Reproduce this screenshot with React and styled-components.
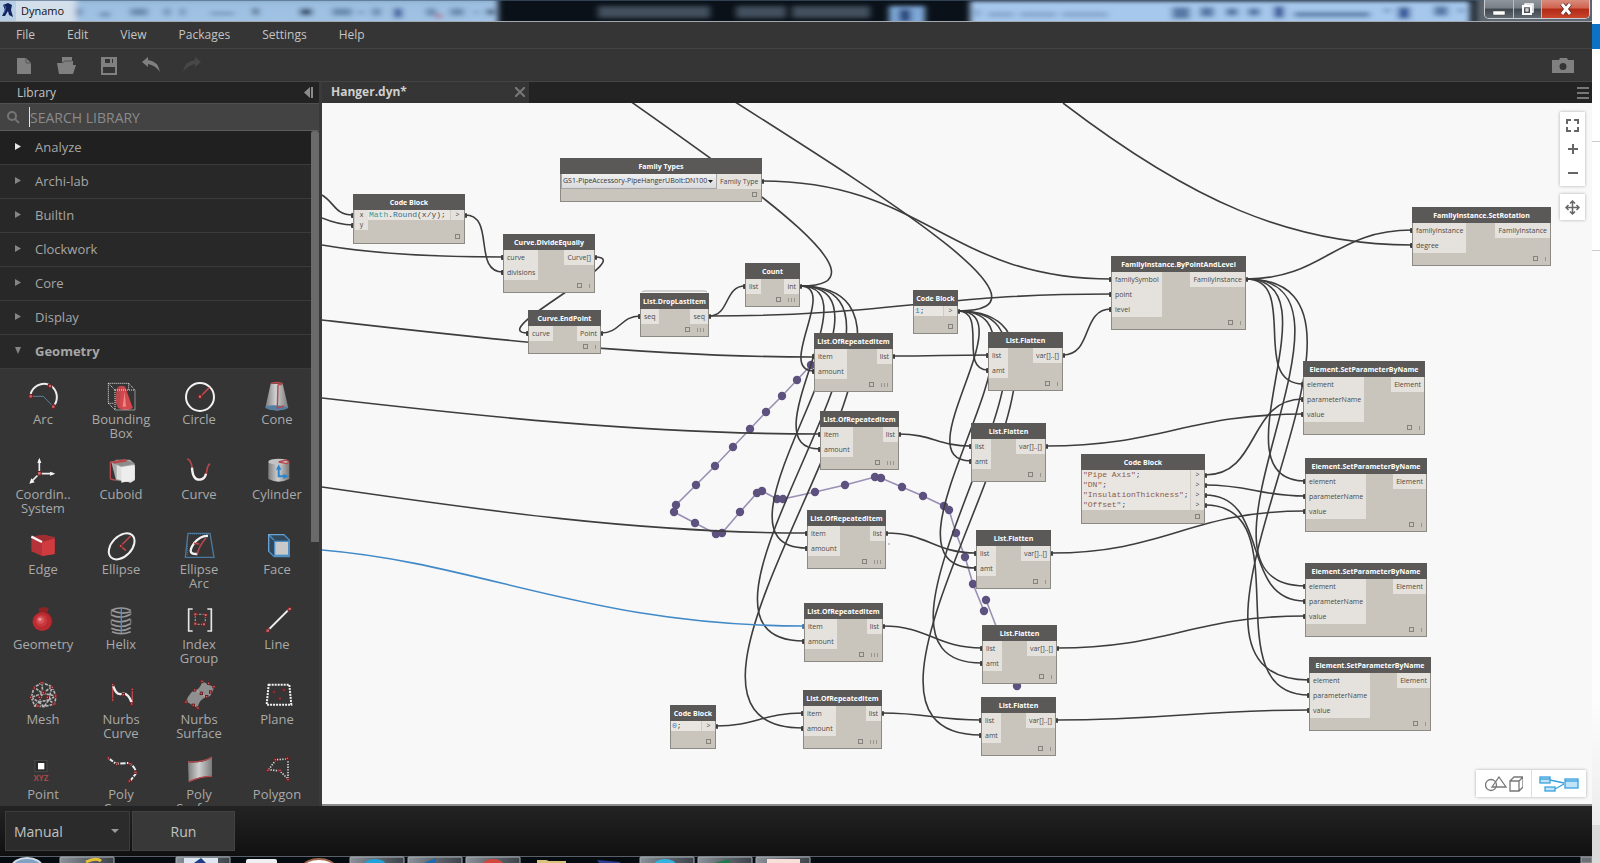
import React, { useState } from 'react';
import styled, { createGlobalStyle, css } from 'styled-components';

const GlobalStyle = createGlobalStyle`
  * { box-sizing: border-box; }
  body { margin: 0; background: #fff; font-family: 'Open Sans', 'Noto Sans', sans-serif; }
  button, input, select { font: inherit; color: inherit; border: 0; margin: 0; padding: 0; background: none; outline: none; }
  svg { display: block; }
`;

/* ---------- window ---------- */

const Screen = styled.div`
  display: flex;
  height: 100vh;
  overflow: hidden;
`;

const Desktop = styled.div`
  width: 8px;
  background: linear-gradient(#fff 0 24px, #0b72c6 24px 49px, #fff 49px 141px, #ccc 141px 142px, #fff 142px 250px, #ccc 250px 251px, #fdfdfd 251px 700px, #ececec 825px, #dadada 825px);
`;

const Window = styled.div`
  flex: 1;
  min-width: 0;
  display: flex;
  flex-direction: column;
  background: #353535;
  color: #b4b4b4;
`;

const TitleBar = styled.header`
  position: relative;
  display: flex;
  align-items: center;
  height: 22px;
  flex-shrink: 0;
  border-bottom: 1px solid #a3a9ae;
  background: #0a1119;
  overflow: hidden;
`;

const Glass = styled.svg`
  position: absolute;
  inset: 0;
  width: 100%;
  height: 22px;
`;

const AppTitle = styled.h1`
  position: relative;
  flex: 1;
  margin: 0 0 0 5px;
  font-size: 11px;
  font-weight: 400;
  line-height: 22px;
  color: #111;
`;

const AppMark = styled.svg`
  position: relative;
`;

const WindowButtons = styled.div`
  position: relative;
  align-self: flex-start;
  display: flex;
  margin-right: 2px;
  height: 19px;
  border: 1px solid #c9cdd1;
  border-top: 0;
  border-radius: 0 0 5px 5px;
  overflow: hidden;
`;

const WindowButton = styled.button`
  display: flex;
  align-items: center;
  justify-content: center;
  width: ${({ $wide }) => ($wide ? 48 : 28)}px;
  border-left: ${({ $first }) => ($first ? 0 : '1px solid #b9bdc2')};
  background: ${({ $close }) =>
    $close
      ? 'linear-gradient(#d98c7c, #cf6350 45%, #b12a17 50%, #c8452c)'
      : 'linear-gradient(#8f959b, #787e85 45%, #3f464e 50%, #626a73)'};
`;

/* ---------- menu and toolbar ---------- */

const MenuBar = styled.nav`
  display: flex;
  gap: 32px;
  height: 27px;
  flex-shrink: 0;
  padding: 0 16px;
  border-bottom: 1px solid #444;
`;

const MenuItem = styled.button`
  font-size: 12px;
  line-height: 24px;
  color: #c4c4c4;
`;

const ToolBar = styled.div`
  display: flex;
  align-items: center;
  gap: 22px;
  height: 33px;
  flex-shrink: 0;
  padding: 1px 18px 0 14px;
  border-bottom: 1px solid #444;
`;

const ToolButton = styled.button`
  width: 20px;
  height: 20px;
  color: ${({ $dim }) => ($dim ? '#484848' : '#808080')};
  ${({ $end }) => $end && css`
    width: 22px;
    margin-left: auto;
  `}
`;

const Main = styled.div`
  flex: 1;
  min-height: 0;
  display: flex;
`;

/* ---------- library ---------- */

const Library = styled.aside`
  width: 322px;
  flex-shrink: 0;
  display: flex;
  flex-direction: column;
  border-right: 3px solid #3a3a3a;
`;

const LibraryHead = styled.div`
  display: flex;
  align-items: center;
  justify-content: space-between;
  height: 21px;
  flex-shrink: 0;
  padding: 0 5px 0 17px;
  background: #232323;
`;

const LibraryTitle = styled.h2`
  margin: 0;
  font-size: 12px;
  font-weight: 400;
  line-height: 20px;
  color: #c4c4c4;
`;

const Search = styled.label`
  display: flex;
  align-items: center;
  height: 28px;
  flex-shrink: 0;
  padding-left: 7px;
  border-top: 1px solid #505050;
  border-bottom: 1px solid #5c5c5c;
  background: #434343;
`;

const Caret = styled.span`
  width: 1px;
  height: 20px;
  margin-left: 9px;
  background: #e4e4e4;
`;

const SearchInput = styled.input`
  flex: 1;
  min-width: 0;
  font-size: 14px;
  &::placeholder { color: #8a8a8a; opacity: 1; }
`;

const LibraryBody = styled.div`
  flex: 1;
  min-height: 0;
  display: flex;
  overflow: hidden;
`;

const Categories = styled.div`
  flex: 1;
  min-width: 0;
`;

const ScrollTrack = styled.div`
  width: 8px;
`;

const ScrollThumb = styled.div`
  height: 411px;
  border-radius: 3px 3px 0 0;
  background: #6a6a6a;
`;

const Category = styled.button`
  display: flex;
  align-items: center;
  gap: 14px;
  width: 100%;
  height: 34px;
  padding: 0 15px 2px;
  border-bottom: 1px solid #3b3b3b;
  background: ${({ $hover }) => ($hover ? '#202020' : '#282828')};
  font-size: 13px;
  font-weight: ${({ $open }) => ($open ? 700 : 400)};
  color: #a6a6a6;
  svg { fill: ${({ $hover }) => ($hover ? '#e6e6e6' : '#858585')}; }
`;

const Tiles = styled.div`
  display: grid;
  grid-template-columns: repeat(4, 78px);
  grid-auto-rows: 75px;
  padding: 13px 0 0 4px;
`;

const Tile = styled.button`
  display: flex;
  flex-direction: column;
  align-items: center;
  justify-content: flex-start;
  font-size: 13px;
  line-height: 14px;
  color: #a9a9a9;
  svg { overflow: visible; flex-shrink: 0; }
  span { max-width: 60px; }
`;

/* ---------- workspace ---------- */

const Workspace = styled.section`
  flex: 1;
  min-width: 0;
  display: flex;
  flex-direction: column;
`;

const Tabs = styled.div`
  display: flex;
  height: 21px;
  flex-shrink: 0;
  background: #232323;
`;

const Tab = styled.div`
  display: flex;
  align-items: center;
  justify-content: space-between;
  width: 207px;
  padding: 0 4px 2px 9px;
  background: #353535;
  font-size: 12px;
  font-weight: 700;
  line-height: 18px;
  color: #cfcfcf;
`;

const TabMenu = styled.button`
  margin: 0 3px 0 auto;
`;

const Canvas = styled.div`
  position: relative;
  flex: 1;
  overflow: hidden;
  background: #f8f8f8;
  border-bottom: 2px solid #8b8b8b;
`;

/* the graph is panned: its origin lies above and to the left of the canvas */
const World = styled.div`
  position: absolute;
  left: -322px;
  top: -103px;
`;

const Wires = styled.svg`
  position: absolute;
  left: 0;
  top: 0;
  overflow: visible;
`;

const NodeCard = styled.article`
  position: absolute;
  display: flex;
  flex-direction: column;
  min-height: 44px;
  border: 1px solid #8c8a85;
  background: #cac5bc;
  font-size: 7px;
  color: #4a4947;
`;

const NodeTitle = styled.h3`
  margin: -1px -1px 0;
  height: 16px;
  background: #5b5957;
  color: #fff;
  font-size: 7px;
  font-weight: 700;
  line-height: 17px;
  text-align: center;
  white-space: nowrap;
`;

const NodeBody = styled.div`
  display: flex;
  justify-content: space-between;
  align-items: flex-start;
`;

const Ports = styled.ul`
  margin: 0;
  padding: 0;
  list-style: none;
  flex-shrink: 0;
`;

const Port = styled.li`
  height: ${({ $code }) => ($code ? 10 : 15)}px;
  padding: 0 3px;
  background: #e5e2dd;
  line-height: ${({ $code }) => ($code ? 10 : 15)}px;
  white-space: nowrap;
  ${({ $code }) => $code && css`
    width: 14px;
    text-align: center;
    border-left: 1px solid #cfcbc4;
  `}
`;

const Editor = styled.pre`
  flex: 1;
  min-width: 0;
  margin: 0;
  padding-left: 1px;
  background: #e9e6e2;
  font-family: 'Liberation Mono', monospace;
  font-size: 8px;
  line-height: 10px;
`;

const Code = styled.span`
  color: ${({ $kind }) => ({ cls: '#35a09c', fn: '#2c6f95', str: '#8b5a48', num: '#2f7fd0' }[$kind] || '#444')};
`;

const FamilySelect = styled.label`
  display: flex;
  align-items: center;
  flex: 1;
  height: 15px;
  padding: 0 3px 0 1px;
  border: 1px solid #a5a5a5;
  border-top: 0;
  background: linear-gradient(#f0f0f0, #d9dadd);
  select {
    flex: 1;
    min-width: 0;
    appearance: none;
    font-size: 7px;
    line-height: 12px;
    color: #333;
  }
`;

const NodeFoot = styled.footer`
  flex: 1;
  display: flex;
  align-items: flex-end;
  justify-content: flex-end;
  gap: 7px;
  min-height: ${({ $code }) => ($code ? 13 : 12)}px;
  padding: 0 4px 4px;
`;

const Preview = styled.span`
  width: 5px;
  height: 5px;
  border: 1px solid #85827d;
`;

const Lacing = styled.span`
  display: flex;
  gap: 2px;
  i { width: 1px; height: 4px; background: #98958f; }
`;

const NavTools = styled.div`
  position: absolute;
  top: 9px;
  right: 7px;
  display: flex;
  flex-direction: column;
  gap: 8px;
`;

const NavGroup = styled.div`
  display: flex;
  flex-direction: column;
  padding: 1px 0;
  background: #fff;
  box-shadow: 0 0 3px rgba(0, 0, 0, 0.3);
`;

const NavButton = styled.button`
  display: flex;
  align-items: center;
  justify-content: center;
  width: 25px;
  height: 24px;
`;

const ViewSwitch = styled.div`
  position: absolute;
  right: 6px;
  bottom: 7px;
  display: flex;
  background: #fff;
  box-shadow: 0 0 3px rgba(0, 0, 0, 0.3);
`;

const ViewButton = styled.button`
  display: flex;
  align-items: center;
  justify-content: center;
  width: 55px;
  height: 27px;
  & + & { border-left: 1px solid #ddd; }
`;

/* ---------- run bar and task bar ---------- */

const RunBar = styled.div`
  display: flex;
  align-items: center;
  gap: 2px;
  height: 50px;
  flex-shrink: 0;
  padding: 0 5px;
  background: linear-gradient(#232323, #101010);
`;

const RunMode = styled.label`
  display: flex;
  align-items: center;
  width: 125px;
  height: 40px;
  padding: 0 10px 0 8px;
  border: 1px solid #3c3c3c;
  background: #2b2b2b;
  select {
    flex: 1;
    appearance: none;
    font-size: 14px;
    color: #c2c2c2;
  }
`;

const RunButton = styled.button`
  width: 103px;
  height: 40px;
  border: 1px solid #424242;
  background: #383838;
  font-size: 14px;
  color: #c2c2c2;
`;

const TaskBar = styled.svg`
  flex-shrink: 0;
  width: 100%;
  height: 7px;
`;

/* ---------- library drawings ---------- */

const RED = '#b8474b';
const BLUE = '#4f8fc4';

const Dots = ({ at, size = 10 }) =>
  at.map(([x, y], i) => (
    <rect key={i} x={x - size / 2} y={y - size / 2} width={size} height={size} fill="#d5686b" stroke="#6b1f22" strokeWidth="3" />
  ));

const drawings = {
  Arc: (
    <>
      <path d="M12 43H46L74 72" fill="none" stroke="#5b7f9d" strokeWidth="3" />
      <path d="M8 36A42 42 0 0 1 62 8M70 12A42 42 0 0 1 80 68" fill="none" stroke="#eee" strokeWidth="6" />
      <Dots at={[[8, 43], [66, 12], [76, 74]]} />
    </>
  ),
  'Bounding Box': (
    <>
      <path d="M32 20Q38 8 54 12L80 78Q60 90 36 78L28 60Z" fill={RED} />
      <path d="M46 14L40 78Q60 88 80 78L58 14Z" fill="#d9484c" opacity=".8" />
      <path d="M56 30L50 74H60Z" fill="#eb8a8c" />
      <path d="M7 4H68L87 24V84H27L7 64ZM27 24H87M27 24V84M7 4L27 24M68 4V24M7 64H24" fill="none" stroke="#e9e9e9" strokeWidth="3" strokeDasharray="3 3" />
    </>
  ),
  Circle: (
    <>
      <circle cx="48" cy="45" r="42" fill="none" stroke="#f2f2f2" strokeWidth="6" />
      <path d="M48 45L76 17" stroke={RED} strokeWidth="5" />
      <Dots at={[[48, 44]]} />
    </>
  ),
  Cone: (
    <>
      <path d="M26 5H62L79 78Q46 92 10 78Z" fill="url(#metal)" />
      <path d="M11 72Q8 84 46 86Q74 84 78 76Q50 66 11 72Z" fill="#557ea3" />
      <path d="M26 5Q44 -2 62 5M48 8L46 78L66 72M48 8H60" fill="none" stroke={RED} strokeWidth="4" />
    </>
  ),
  'Coordin.. System': (
    <>
      <path d="M34 44V10M40 50H76M30 54L10 74" stroke="#eee" strokeWidth="5" />
      <path d="M34 2L28 18H40ZM82 50L66 44V56ZM4 80L20 76L10 64Z" fill="#f4f4f4" />
      <Dots at={[[34, 49]]} size={11} />
    </>
  ),
  Cuboid: (
    <>
      <path d="M16 16L32 8H72L86 20V64L74 76L30 70Z" fill="#a9a9a9" />
      <path d="M12 14L58 8L86 20L46 28Z" fill="#8c8c8c" />
      <path d="M32 24L46 30H86V70L74 77L32 66Z" fill="#dedede" />
      <path d="M46 30L86 24V68L46 77Z" fill="#ededed" />
      <path d="M13 66V16L58 8L60 12L22 18M13 66L30 70" fill="none" stroke={RED} strokeWidth="4" />
    </>
  ),
  Curve: (
    <>
      <path d="M10 5Q24 14 24 34Q26 70 50 68Q66 66 68 44Q70 26 78 20" fill="none" stroke={RED} strokeWidth="5" />
      <path d="M24 32Q26 70 48 68Q62 66 66 50" fill="none" stroke="#f2f2f2" strokeWidth="7" />
    </>
  ),
  Cylinder: (
    <>
      <path d="M19 14V66Q50 82 82 66V14Q50 28 19 14Z" fill="url(#metal)" />
      <ellipse cx="50" cy="14" rx="31" ry="9" fill="#c3c3c3" />
      <path d="M50 15L72 9Q86 14 74 20L50 15" fill="none" stroke={RED} strokeWidth="4" />
      <path d="M50 34V58H72" fill="none" stroke="#2b86cf" strokeWidth="6" />
      <path d="M50 22L42 38H58ZM80 58L64 50V66Z" fill="#2b86cf" />
    </>
  ),
  Edge: (
    <>
      <path d="M10 14L48 8L80 16V66L42 72L10 58Z" fill="#b63439" />
      <path d="M42 30L80 20V66L42 72Z" fill="#d03b40" />
      <path d="M10 14L48 8L80 18L42 30Z" fill="#a12c31" />
      <path d="M10 14L42 30" stroke="#f6f6f6" strokeWidth="7" />
    </>
  ),
  Ellipse: (
    <>
      <ellipse cx="47" cy="43" rx="46" ry="30" transform="rotate(-46 47 43)" fill="none" stroke="#f2f2f2" strokeWidth="6" />
      <path d="M44 42L74 12M44 42L60 56" stroke={RED} strokeWidth="5" />
      <Dots at={[[44, 42]]} size={8} />
    </>
  ),
  'Ellipse Arc': (
    <>
      <path d="M12 4H78L90 76H4Z" fill="none" stroke="#49799f" strokeWidth="4" />
      <path d="M10 12V70M18 6H74" stroke="#49799f" strokeWidth="3" strokeDasharray="3 3" />
      <path d="M72 12Q50 10 30 34Q6 68 40 66" fill="none" stroke="#f2f2f2" strokeWidth="7" />
      <path d="M40 66Q44 44 66 18" fill="none" stroke={RED} strokeWidth="5" />
      <path d="M30 34L46 36" stroke={RED} strokeWidth="5" />
    </>
  ),
  Face: (
    <>
      <path d="M20 8H66L82 24V74H36L20 58ZM20 8L36 24" fill="#31485c" stroke={BLUE} strokeWidth="4" />
      <path d="M20 8H66M20 8V58" stroke="#8dbde4" strokeWidth="3" strokeDasharray="3 3" />
      <rect x="38" y="28" width="42" height="42" fill="#c9c9c9" stroke={BLUE} strokeWidth="4" />
    </>
  ),
  Geometry: (
    <>
      <path d="M32 4Q46 -2 62 4L58 16Q74 28 74 46A31 30 0 0 1 13 46Q14 26 34 16Z" fill="#8e2327" />
      <circle cx="42" cy="44" r="28" fill="#b92b30" />
      <circle cx="40" cy="41" r="18" fill="#c8383d" />
      <circle cx="38" cy="39" r="11" fill="#d65459" />
      <circle cx="36" cy="37" r="5" fill="#eb9799" />
    </>
  ),
  Helix: (
    <>
      <path d="M16 10Q46 -4 74 10M16 10Q46 24 74 14M16 24Q46 38 74 22M16 38Q46 52 74 36M16 52Q46 66 74 50M16 64Q46 78 74 62M18 74Q46 86 74 74" fill="none" stroke="#9a9a9a" strokeWidth="5" />
      <path d="M16 10V24M74 10V24M16 38V52M74 36V50" stroke="#777" strokeWidth="4" />
      <path d="M46 0V78" stroke="#4a90d4" strokeWidth="4" />
    </>
  ),
  'Index Group': (
    <>
      <path d="M26 6H14V72H26M70 6H82V72H70" fill="none" stroke="#e6e6e6" strokeWidth="5" />
      <path d="M34 22H64V52H34Z" fill="none" stroke="#909090" strokeWidth="4" strokeDasharray="7 4" />
      <Dots at={[[34, 22], [65, 24], [34, 50], [60, 52]]} size={9} />
    </>
  ),
  Line: (
    <>
      <path d="M20 68L80 8" stroke="#f2f2f2" strokeWidth="6" />
      <Dots at={[[17, 71], [83, 6]]} />
    </>
  ),
  Mesh: (
    <>
      <path d="M42 2L18 16L10 46L20 72L48 74L80 66L84 42L72 14ZM42 2L44 34L18 16M44 34L72 14M44 34L84 42M44 34L10 46M44 34L32 60L20 72M32 60L62 54L80 66M32 60L48 74L62 54L72 14M10 46L32 60M62 54L84 42" fill="none" stroke="#b5b5b5" strokeWidth="5" strokeDasharray="9 3" />
      <Dots at={[[42, 2], [19, 18], [8, 46], [46, 32], [73, 16], [83, 42], [30, 72], [78, 66], [58, 46], [34, 46]]} size={7} />
    </>
  ),
  'Nurbs Curve': (
    <>
      <path d="M20 8V54M79 22V64" stroke={RED} strokeWidth="4" />
      <path d="M21 10Q30 40 46 36Q66 30 77 62" fill="none" stroke="#ededed" strokeWidth="7" />
      <Dots at={[[20, 8], [20, 54], [79, 22], [77, 66], [52, 38]]} size={7} />
    </>
  ),
  'Nurbs Surface': (
    <>
      <path d="M34 24Q46 24 56 -2Q72 10 90 14Q84 46 66 46Q48 50 40 78Q22 68 6 58Q18 28 34 24Z" fill="#8f8f8f" />
      <path d="M34 24L68 46" stroke="#b5b5b5" strokeWidth="3" />
      <Dots at={[[54, -2], [74, 4], [90, 14], [6, 60], [28, 70], [42, 78], [32, 24], [52, 34], [68, 44], [80, 30]]} size={7} />
    </>
  ),
  Plane: (
    <>
      <path d="M20 8H82L88 68H14Z" fill="none" stroke="#f4f4f4" strokeWidth="6" strokeDasharray="6 3" />
      <Dots at={[[36, 30], [66, 24], [54, 50]]} size={6} />
    </>
  ),
  Point: (
    <>
      <rect x="21" y="10" width="36" height="34" fill="#2a2a2a" stroke="#555" strokeWidth="2" />
      <rect x="30" y="18" width="19" height="19" fill="#fff" />
      <text x="39" y="72" fill="#a3494c" fontSize="24" fontWeight="700" textAnchor="middle">XYZ</text>
    </>
  ),
  'Poly Curve': (
    <>
      <path d="M8 4L30 20L70 18Q94 36 88 52L72 72" fill="none" stroke="#ededed" strokeWidth="6" strokeDasharray="16 4" />
      <Dots at={[[7, 3], [32, 22], [72, 20], [87, 46], [70, 72]]} size={7} />
    </>
  ),
  'Poly Surface': (
    <>
      <path d="M12 16Q52 20 84 2V58Q50 58 14 74Z" fill="url(#metal)" />
      <path d="M12 14Q52 18 84 0M14 74Q50 58 84 58" fill="none" stroke={RED} strokeWidth="4" />
    </>
  ),
  Polygon: (
    <>
      <path d="M20 38L42 8L78 6V66L54 42Z" fill="none" stroke="#d8d8d8" strokeWidth="5" strokeDasharray="4 4" />
      <Dots at={[[18, 40], [40, 8], [76, 4], [54, 40], [78, 68]]} size={7} />
    </>
  ),
};

const LibraryIcon = ({ name }) => (
  <svg width="30" height="30" viewBox="0 0 90 90" aria-hidden="true">
    <defs>
      <linearGradient id="metal">
        <stop offset="0" stopColor="#7d7d7d" />
        <stop offset=".45" stopColor="#d0d0d0" />
        <stop offset="1" stopColor="#7a7a7a" />
      </linearGradient>
    </defs>
    {drawings[name]}
  </svg>
);

/* ---------- graph data ---------- */

const repeated = (id, x, y) => ({ id, x, y, w: 79, title: 'List.OfRepeatedItem', ins: ['item', 'amount'], outs: ['list'], lacing: 3 });
const flatten = (id, x, y) => ({ id, x, y, w: 75, title: 'List.Flatten', ins: ['list', 'amt'], outs: ['var[]..[]'], lacing: 1 });
const setParam = (id, x, y) => ({ id, x, y, w: 122, title: 'Element.SetParameterByName', ins: ['element', 'parameterName', 'value'], outs: ['Element'], lacing: 1 });

const nodes = [
  { id: 'round', x: 353, y: 194, w: 112, title: 'Code Block', ins: ['x', 'y'], outs: ['>'], code: [[['cls', 'Math'], ['', '.'], ['fn', 'Round'], ['', '(x/y);']]] },
  { id: 'divide', x: 503, y: 234, w: 92, title: 'Curve.DivideEqually', ins: ['curve', 'divisions'], outs: ['Curve[]'], lacing: 1 },
  { id: 'end', x: 528, y: 310, w: 73, title: 'Curve.EndPoint', ins: ['curve'], outs: ['Point'], lacing: 1 },
  { id: 'drop', x: 640, y: 293, w: 69, title: 'List.DropLastItem', ins: ['seq'], outs: ['seq'], lacing: 3 },
  { id: 'count', x: 745, y: 263, w: 55, title: 'Count', ins: ['list'], outs: ['int'], lacing: 3 },
  { id: 'types', x: 560, y: 158, w: 202, title: 'Family Types', ins: [], outs: ['Family Type'], family: 'GS1-PipeAccessory-PipeHangerUBolt:DN100' },
  repeated('rep1', 814, 333),
  repeated('rep2', 820, 411),
  repeated('rep3', 807, 510),
  repeated('rep4', 804, 603),
  repeated('rep5', 803, 690),
  { id: 'zero', x: 670, y: 705, w: 46, title: 'Code Block', ins: [], outs: ['>'], code: [[['num', '0'], ['', ';']]] },
  { id: 'one', x: 913, y: 290, w: 45, title: 'Code Block', ins: [], outs: ['>'], code: [[['num', '1'], ['', ';']]] },
  flatten('flat1', 988, 332),
  flatten('flat2', 971, 423),
  flatten('flat3', 976, 530),
  flatten('flat4', 982, 625),
  flatten('flat5', 981, 697),
  { id: 'place', x: 1111, y: 256, w: 135, title: 'FamilyInstance.ByPointAndLevel', ins: ['familySymbol', 'point', 'level'], outs: ['FamilyInstance'], lacing: 1 },
  { id: 'names', x: 1081, y: 454, w: 124, title: 'Code Block', ins: [], outs: ['>', '>', '>', '>'], code: ['"Pipe Axis"', '"DN"', '"InsulationThickness"', '"Offset"'].map(s => [['str', s], ['', ';']]) },
  setParam('set1', 1303, 361),
  setParam('set2', 1305, 458),
  setParam('set3', 1305, 563),
  setParam('set4', 1309, 657),
  { id: 'rotate', x: 1412, y: 207, w: 139, title: 'FamilyInstance.SetRotation', ins: ['familyInstance', 'degree'], outs: ['FamilyInstance'], lacing: 1 },
];

const links = [
  ['round', 0, 'divide', 1],
  ['divide', 0, 'end', 0],
  ['end', 0, 'drop', 0],
  ['drop', 0, 'count', 0],
  ['drop', 0, 'place', 1],
  ['types', 0, 'place', 0],
  ...[1, 2, 3, 4, 5].map(n => ['count', 0, `rep${n}`, 1]),
  ...[1, 2, 3, 4, 5].map(n => ['one', 0, `flat${n}`, 1]),
  ...[1, 2, 3, 4, 5].map(n => [`rep${n}`, 0, `flat${n}`, 0]),
  ['zero', 0, 'rep5', 0],
  ['flat1', 0, 'place', 2],
  ...[1, 2, 3, 4].map(n => [`flat${n + 1}`, 0, `set${n}`, 2]),
  ...[1, 2, 3, 4].map(n => ['place', 0, `set${n}`, 0]),
  ...[1, 2, 3, 4].map(n => ['names', n - 1, `set${n}`, 1]),
  ['place', 0, 'rotate', 0],
];

// wires whose other end is outside the view
const looseWires = [
  'M322 195C335 203 335 215 353 215',
  'M322 218C334 223 342 225 353 225',
  'M322 245C380 255 440 257 503 257',
  'M322 320C470 337 640 357 814 357',
  'M322 398C470 415 640 434 820 434',
  'M322 487C480 510 640 533 807 533',
  'M801 286C984 286 276 -84 459 -84',
  'M958 311C1170 311 304 -105 514 -105',
  'M1063 103C1190 200 1290 245 1412 245',
];

const preview = [
  [811, 365], [797, 380], [782, 396], [766, 412], [750, 429], [733, 447], [715, 466], [696, 485], [676, 505], [674, 512],
  [695, 523], [716, 534], [722, 533], [740, 512], [757, 493], [762, 491], [777, 499], [783, 499], [815, 492], [845, 485],
  [875, 477], [881, 478], [902, 487], [923, 496], [944, 506], [949, 510], [956, 533], [965, 557], [973, 584], [984, 611],
];
const previewTail = [[986, 600], [996, 626], [1017, 686]];

const portY = (node, i) => node.y + (node.code ? 21 + 10 * i : 23 + 15 * i);
const byId = Object.fromEntries(nodes.map(n => [n.id, n]));

function wirePath([from, out, to, into]) {
  const a = byId[from];
  const b = byId[to];
  const x1 = a.x + a.w;
  const y1 = portY(a, out);
  const x2 = b.x;
  const y2 = portY(b, into);
  const o = 0.45 * Math.hypot(x2 - x1, y2 - y1);
  return `M${x1} ${y1}C${x1 + o} ${y1} ${x2 - o} ${y2} ${x2} ${y2}`;
}

function GraphNode({ node }) {
  const { x, y, w, title, ins, outs, code, family, lacing } = node;
  return (
    <NodeCard style={{ left: x, top: y, width: w }}>
      <NodeTitle>{title}</NodeTitle>
      <NodeBody>
        {(ins.length > 0) && (
          <Ports>
            {ins.map(name => <Port key={name} $code={!!code}>{name}</Port>)}
          </Ports>
        )}
        {code && (
          <Editor>
            {code.map((line, i) => (
              <div key={i}>{line.map(([kind, text], k) => <Code key={k} $kind={kind}>{text}</Code>)}</div>
            ))}
          </Editor>
        )}
        {family && (
          <FamilySelect>
            <select aria-label="Family type" defaultValue={family}><option>{family}</option></select>
            <svg width="5" height="3" viewBox="0 0 5 3"><path d="M0 0H5L2.500 3Z" fill="#222" /></svg>
          </FamilySelect>
        )}
        <Ports>
          {outs.map((name, i) => <Port key={i} $code={!!code}>{name}</Port>)}
        </Ports>
      </NodeBody>
      <NodeFoot $code={!!code}>
        <Preview />
        {lacing && <Lacing>{Array.from({ length: lacing }, (_, i) => <i key={i} />)}</Lacing>}
      </NodeFoot>
    </NodeCard>
  );
}

function Graph() {
  const inPorts = nodes.flatMap(n => n.ins.map((_, i) => [n.x - 2, portY(n, i), n.id === 'rep4' && i === 0]));
  const outPorts = nodes
    .filter(n => links.some(l => l[0] === n.id))
    .flatMap(n => n.outs.map((_, i) => [n.x + n.w, portY(n, i)]));
  return (
    <World>
      <Wires width="1600" height="863" aria-hidden="true">
        <g fill="none" stroke="#9a8fb5" strokeWidth="1.6">
          <polyline points={preview.join(' ')} />
          <polyline points={previewTail.join(' ')} />
        </g>
        <g fill="#5d517f">
          {[...preview, previewTail[0], previewTail[2]].map(([cx, cy], i) => <circle key={i} cx={cx} cy={cy} r="4.2" />)}
        </g>
        <circle cx="889" cy="544" r="1" fill="#bbb" />
        <g fill="none" stroke="#3d3d3d" strokeWidth="1.6">
          {looseWires.map(d => <path key={d} d={d} />)}
          {links.map(l => <path key={l.join()} d={wirePath(l)} />)}
        </g>
        <path d="M322 550C480 563 590 626 804 626" fill="none" stroke="#4189c7" strokeWidth="1.6" />
        <path d="M642 292Q643 291 645 291H704Q706 291 707 292" fill="none" stroke="#aaa" />
        {inPorts.map(([x, y, hot], i) => <rect key={i} x={x} y={y - 2} width="3" height="5" rx="1" fill={hot ? '#3b7db8' : '#3d3d3d'} />)}
        {outPorts.map(([x, y], i) => <rect key={i} x={x} y={y - 2} width="2" height="5" rx="1" fill="#3d3d3d" />)}
      </Wires>
      {nodes.map(n => <GraphNode key={n.id} node={n} />)}
    </World>
  );
}

/* ---------- chrome drawings ---------- */

const Smudges = ({ list, fill }) => list.map(([x, w, y = 8, h = 8], i) => <rect key={i} x={x} y={y} width={w} height={h} fill={fill} />);

const TitleGlass = () => (
  <Glass viewBox="0 0 1592 22" preserveAspectRatio="none" aria-hidden="true">
    <defs>
      <filter id="soft" x="-20%" y="-50%" width="140%" height="200%"><feGaussianBlur stdDeviation="3 2.2" /></filter>
      <linearGradient id="sky" x2="0" y2="1">
        <stop offset="0" stopColor="#6f94b8" />
        <stop offset=".2" stopColor="#9dbfe0" />
        <stop offset="1" stopColor="#a3c4e6" />
      </linearGradient>
    </defs>
    <rect width="1592" height="22" fill="#0a1119" />
    <g filter="url(#soft)">
      <rect x="-10" y="-4" width="508" height="36" fill="url(#sky)" />
      <rect x="970" y="1" width="500" height="34" fill="#a6c8ec" />
      <rect x="1476" y="-4" width="130" height="36" fill="#5d6670" />
      <rect x="-4" y="-2" width="80" height="30" fill="#d3dfeb" />
      <rect x="889" y="6" width="36" height="22" fill="#7fa9d8" />
      <rect x="899" y="9" width="12" height="13" fill="#26477f" />
      <Smudges fill="#42505d" list={[[598, 112, 6, 12], [736, 50, 6, 12], [792, 78, 6, 12]]} />
      <Smudges fill="#6b8db0" list={[[76, 6], [100, 10, 12, 5], [130, 18], [164, 6], [180, 5], [210, 24, 12, 3], [254, 5], [300, 12], [332, 20], [358, 6, 11, 3], [372, 9], [426, 10], [450, 14], [474, 5, 11, 3]]} />
      <Smudges fill="#2d4668" list={[[300, 12, 9, 6], [253, 4, 8, 6], [487, 7, 9, 6]]} />
      <Smudges fill="#b0607a" list={[[436, 6, 14, 4]]} />
      <Smudges fill="#86a6cb" list={[[974, 6, 9, 8], [988, 26, 12, 5], [1020, 36, 12, 5], [1062, 46, 12, 5]]} />
      <Smudges fill="#5578a5" list={[[1172, 18, 7, 12], [1200, 14, 7, 10], [1226, 12], [1248, 12], [1294, 76, 12, 5], [1384, 6, 9, 3], [1434, 14, 6, 10], [1458, 6, 9, 3]]} />
      <Smudges fill="#31569a" list={[[1274, 10, 6, 12], [1398, 12, 7, 12], [394, 8, 8, 10]]} />
    </g>
    <rect width="1592" height="1" fill="#48617a" opacity=".6" />
  </Glass>
);

const TaskButton = ({ x }) => <rect x={x} y="1" width="54" height="8" rx="1" fill="url(#task)" stroke="#a9afb5" />;

const Tasks = () => (
  <TaskBar viewBox="0 0 1592 7" preserveAspectRatio="xMinYMin slice" aria-hidden="true">
    <defs>
      <linearGradient id="task">
        <stop offset="0" stopColor="#8b9299" />
        <stop offset=".5" stopColor="#5f666d" />
        <stop offset="1" stopColor="#3c434a" />
      </linearGradient>
    </defs>
    <rect width="1592" height="7" fill="#060a11" />
    <rect width="1592" height="1" fill="#596067" />
    <ellipse cx="27" cy="11" rx="15" ry="9" fill="#7fa3c4" stroke="#d3dde6" strokeWidth="2" />
    {[60, 176, 350, 408, 466, 640, 698, 756].map(x => <TaskButton key={x} x={x} />)}
    <path d="M86 6Q96 1 101 5" fill="none" stroke="#e6c235" strokeWidth="3" />
    <rect x="184" y="2" width="34" height="5" fill="#dfe8f2" />
    <path d="M194 7L201 2L206 7Z" fill="#1d3e86" />
    <rect x="246" y="3" width="31" height="6" rx="2" fill="#eef0f2" />
    <ellipse cx="319" cy="10" rx="15" ry="7" fill="#fff" stroke="#a5694d" strokeWidth="2" />
    <ellipse cx="375" cy="9" rx="11" ry="6" fill="#1da4dc" />
    <path d="M424 7L436 2V7Z" fill="#1a6ab4" />
    <ellipse cx="493" cy="8" rx="10" ry="5" fill="#d0473d" />
    <path d="M537 7V4H546L549 5H566V7Z" fill="#d9c37a" />
    <path d="M597 4L620 6V7H599Z" fill="#2c3f94" />
    <ellipse cx="665" cy="9" rx="11" ry="6" fill="#35b3e2" />
    <path d="M714 7L730 3V7Z" fill="#1e7a4b" />
    <rect x="767" y="3" width="33" height="4" fill="#f7dfda" />
    <rect x="1581" y="1" width="11" height="6" fill="#6d7175" stroke="#9a9ea2" />
  </TaskBar>
);

const categories = ['Analyze', 'Archi-lab', 'BuiltIn', 'Clockwork', 'Core', 'Display', 'Geometry'];

export default function App() {
  const [open, setOpen] = useState('Geometry');

  return (
    <Screen>
      <GlobalStyle />
      <Window>
        <TitleBar>
          <TitleGlass />
          <AppMark width="16" height="20" viewBox="0 0 16 20" aria-hidden="true">
            <rect width="16" height="20" fill="#b9cfe6" />
            <path d="M3 4L8 2L12 4L11 9L13 16L9 14L8 10L5 15H2L5 9Z" fill="#12245c" />
            <path d="M3 4L6 6L4 12" fill="none" stroke="#3f66b5" />
          </AppMark>
          <AppTitle>Dynamo</AppTitle>
          <WindowButtons>
            <WindowButton $first aria-label="Minimize">
              <svg width="14" height="14"><rect x="1" y="9" width="12" height="4" fill="#fff" stroke="#444" strokeWidth=".5" /></svg>
            </WindowButton>
            <WindowButton aria-label="Restore">
              <svg width="14" height="14" fill="none" stroke="#fff" strokeWidth="2"><path d="M4 3V2H12V10H11" strokeWidth="1.5" /><rect x="2" y="4" width="8" height="8" /><rect x="5" y="7" width="2" height="2" strokeWidth="1" /></svg>
            </WindowButton>
            <WindowButton $wide $close aria-label="Close">
              <svg width="14" height="14"><path d="M3 2L11 12M11 2L3 12" stroke="#5a2a24" strokeWidth="4.5" /><path d="M3 2L11 12M11 2L3 12" stroke="#fff" strokeWidth="3" /></svg>
            </WindowButton>
          </WindowButtons>
        </TitleBar>

        <MenuBar>
          {['File', 'Edit', 'View', 'Packages', 'Settings', 'Help'].map(m => <MenuItem key={m}>{m}</MenuItem>)}
        </MenuBar>

        <ToolBar>
          <ToolButton aria-label="New">
            <svg width="20" height="20" fill="currentColor"><path d="M3 2H12L17 7V18H3Z" /><path d="M12 2V7H17" fill="none" stroke="#555" /></svg>
          </ToolButton>
          <ToolButton aria-label="Open">
            <svg width="20" height="20" fill="currentColor"><path d="M6 1H16V9H6Z" /><path d="M1 7H6L8 5H17V9H20L17 18H3Z" /><path d="M6 7L9 5H16" fill="none" stroke="#555" /></svg>
          </ToolButton>
          <ToolButton aria-label="Save">
            <svg width="20" height="20" fill="none" stroke="currentColor" strokeWidth="2"><path d="M4 2H18V18H4Z" /><path d="M4 10H18M6 3V8H16V3" /><path d="M13 3V7" /></svg>
          </ToolButton>
          <ToolButton aria-label="Undo">
            <svg width="20" height="20" fill="currentColor"><path d="M2 6L8 1V4Q18 5 20 16Q15 9 8 8V11Z" /></svg>
          </ToolButton>
          <ToolButton $dim aria-label="Redo">
            <svg width="20" height="20" fill="currentColor"><path d="M19 6L13 1V4Q3 5 1 16Q6 9 13 8V11Z" /></svg>
          </ToolButton>
          <ToolButton $end aria-label="Export image">
            <svg width="22" height="20" fill="currentColor"><path fillRule="evenodd" d="M0 4H7L8 2H15L16 4H22V17H0V4ZM11 7A3.5 3.5 0 1 0 11 14A3.5 3.5 0 1 0 11 7Z" /></svg>
          </ToolButton>
        </ToolBar>

        <Main>
          <Library>
            <LibraryHead>
              <LibraryTitle>Library</LibraryTitle>
              <button aria-label="Collapse library">
                <svg width="10" height="11" fill="#8c8c8c"><path d="M6 0V11L0 5.500Z" /><rect x="7" width="2" height="11" /></svg>
              </button>
            </LibraryHead>
            <Search>
              <svg width="13" height="13" fill="none" stroke="#757575" strokeWidth="2"><circle cx="5" cy="5" r="4" /><path d="M8 8L12 12" /></svg>
              <Caret />
              <SearchInput placeholder="SEARCH LIBRARY" aria-label="Search library" />
            </Search>
            <LibraryBody>
              <Categories>
                {categories.map((c, i) => (
                  <Category key={c} $hover={i === 0} $open={open === c} onClick={() => setOpen(c)}>
                    <svg width="6" height="7">{open === c ? <path d="M0 0H6L3 7Z" /> : <path d="M0 0L6 3.500L0 7Z" />}</svg>
                    {c}
                  </Category>
                ))}
                <Tiles>
                  {Object.keys(drawings).map(name => (
                    <Tile key={name}>
                      <LibraryIcon name={name} />
                      <span>{name}</span>
                    </Tile>
                  ))}
                </Tiles>
              </Categories>
              <ScrollTrack><ScrollThumb /></ScrollTrack>
            </LibraryBody>
          </Library>

          <Workspace>
            <Tabs>
              <Tab>
                Hanger.dyn*
                <button aria-label="Close tab">
                  <svg width="10" height="10" stroke="#777" strokeWidth="2"><path d="M0 0L10 10M10 0L0 10" /></svg>
                </button>
              </Tab>
              <TabMenu aria-label="Tab list">
                <svg width="12" height="12" stroke="#777" strokeWidth="2"><path d="M0 1H12M0 6H12M0 11H12" /></svg>
              </TabMenu>
            </Tabs>
            <Canvas>
              <Graph />
              <NavTools>
                <NavGroup>
                  <NavButton aria-label="Zoom to fit">
                    <svg width="13" height="13" fill="none" stroke="#666" strokeWidth="2"><path d="M1 5V1H5M8 1H12V5M12 8V12H8M5 12H1V8" /></svg>
                  </NavButton>
                  <NavButton aria-label="Zoom in">
                    <svg width="12" height="12" stroke="#666" strokeWidth="2"><path d="M1 6H11M6 1V11" /></svg>
                  </NavButton>
                  <NavButton aria-label="Zoom out">
                    <svg width="12" height="12" stroke="#666" strokeWidth="2"><path d="M1 6H11" /></svg>
                  </NavButton>
                </NavGroup>
                <NavGroup>
                  <NavButton aria-label="Pan">
                    <svg width="15" height="15" fill="none" stroke="#666" strokeWidth="1.5"><path d="M7.500 1V14M1 7.500H14M5 3.500L7.500 1L10 3.500M5 11.500L7.500 14L10 11.500M3.500 5L1 7.500L3.500 10M11.500 5L14 7.500L11.500 10" /></svg>
                  </NavButton>
                </NavGroup>
              </NavTools>
              <ViewSwitch>
                <ViewButton aria-label="Geometry view">
                  <svg width="38" height="16" fill="none" stroke="#777" strokeWidth="1.3"><circle cx="6" cy="9" r="5.500" /><path d="M14 1L21 11H7ZM25 5H34V15H25ZM25 5L29 1H38V11L34 15M34 5L38 1" /></svg>
                </ViewButton>
                <ViewButton aria-label="Graph view">
                  <svg width="40" height="16" fill="#bfe3f8" stroke="#3aa0dd" strokeWidth="1.3"><path d="M11 4L25 7M16 13L25 8" fill="none" /><rect x="1" y="1" width="10" height="6" /><path d="M1 3H11" /><rect x="6" y="11" width="10" height="4" /><rect x="26" y="3" width="13" height="9" /><path d="M26 5H39" /></svg>
                </ViewButton>
              </ViewSwitch>
            </Canvas>
          </Workspace>
        </Main>

        <RunBar>
          <RunMode>
            <select aria-label="Run mode" defaultValue="Manual"><option>Manual</option><option>Automatic</option></select>
            <svg width="8" height="4"><path d="M0 0H8L4 4Z" fill="#999" /></svg>
          </RunMode>
          <RunButton>Run</RunButton>
        </RunBar>
        <Tasks />
      </Window>
      <Desktop />
    </Screen>
  );
}
